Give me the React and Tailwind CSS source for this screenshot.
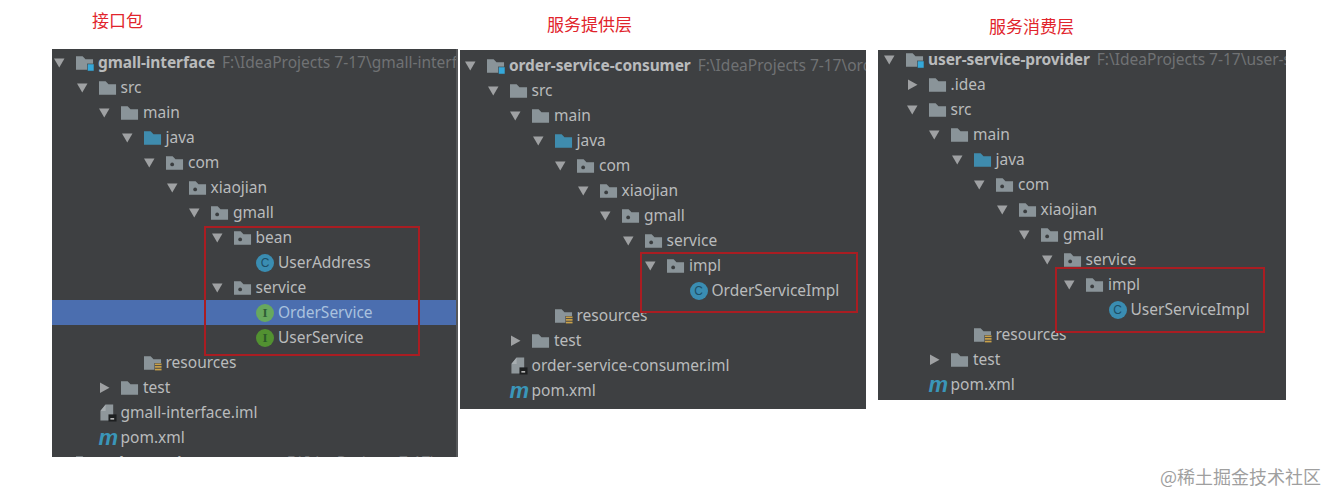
import React from "react";

const Folder = ({ kind }) => {
  const fill = kind === "java" ? "#3f8cae" : "#8a9499";
  return (
    <svg width="19" height="18" viewBox="0 0 19 18" className="block">
      <path d="M0 2h7l3 3h8v11H0z" fill={fill} />
      {kind === "pkg" && <circle cx="6.5" cy="10.5" r="2" fill="#3a3d3f" />}
      {kind === "module" && (
        <rect x="12" y="10" width="7" height="7.5" fill="#35a8da" stroke="#3e4042" strokeWidth="0.6" />
      )}
      {kind === "res" && (
        <g>
          <rect x="11" y="9" width="8" height="9" fill="#3e4042" />
          <rect x="11.5" y="9.5" width="7" height="1.8" fill="#c9a14a" />
          <rect x="11.5" y="12.2" width="7" height="1.8" fill="#c9a14a" />
          <rect x="11.5" y="15" width="7" height="1.8" fill="#c9a14a" />
        </g>
      )}
    </svg>
  );
};

const FileIcon = () => (
  <svg width="19" height="19" viewBox="0 0 19 19" className="block">
    <path d="M1.5 8L7 1h8v17H1.5z" fill="#8f979b" />
    <path d="M1.5 8H7V1z" fill="#a7adb0" />
    <rect x="10" y="11.5" width="8.5" height="7.5" fill="#1d1f20" />
    <rect x="12" y="15.5" width="4" height="1.4" fill="#d8d8d8" />
  </svg>
);

const Badge = ({ letter, selected }) => {
  const tone =
    letter === "C"
      ? "bg-[#3a8db2] text-[#1d4e66] font-['Liberation_Sans',sans-serif] text-[12px] font-normal"
      : selected
        ? "bg-[#67a85e] text-[#2f5f36] font-['Liberation_Serif',serif] text-[13px] font-bold"
        : "bg-[#529131] text-[#2c5a2a] font-['Liberation_Serif',serif] text-[13px] font-bold";
  return (
    <span className={`flex h-[18px] w-[18px] items-center justify-center rounded-full leading-none ${tone}`}>
      {letter}
    </span>
  );
};

const Icon = ({ kind, selected }) => {
  if (kind === "C") return <Badge letter="C" />;
  if (kind === "I") return <Badge letter="I" selected={selected} />;
  if (kind === "iml") return <FileIcon />;
  if (kind === "m")
    return (
      <span className="block font-['Liberation_Sans',sans-serif] text-[22px] font-bold italic leading-[25px] text-[#3a96b9]">
        m
      </span>
    );
  return <Folder kind={kind} />;
};

const Arrow = ({ dir }) => (
  <svg width="12" height="12" viewBox="0 0 12 12" className="block">
    {dir === "down" ? <path d="M0 1.5h10.5L5.25 10.5z" fill="#9fa1a3" /> : <path d="M1 .5l9.5 5.25L1 11z" fill="#9fa1a3" />}
  </svg>
);

const Row = ({ base, level, kind, name, arrow, path, selected }) => (
  <div
    className={`flex h-[25px] items-center whitespace-nowrap ${selected ? "bg-[#4b6eaf]" : ""}`}
    style={{ paddingLeft: base + level * 22.5 }}
  >
    <span className="flex w-6 shrink-0 pl-[2px]">{arrow && <Arrow dir={arrow} />}</span>
    <span className="flex w-[18px] shrink-0 items-center">
      <Icon kind={kind} selected={selected} />
    </span>
    <span
      className={`ml-[4px] ${kind === "module" ? "font-bold tracking-[-0.1px]" : ""} ${selected ? "text-[#a9c1de]" : "text-[#b9bbbc]"}`}
    >
      {name}
    </span>
    {path && <span className="ml-[7px] text-[#707274]">{path}</span>}
  </div>
);

const Panel = ({ className, listClass, base, rows, box }) => (
  <div className={`relative overflow-hidden bg-[#3e4042] font-['Noto_Sans',sans-serif] text-[15.5px] ${className}`}>
    <div className={listClass}>
      {rows.map((r, i) => (
        <Row key={i} base={base} level={r[0]} kind={r[1]} name={r[2]} arrow={r[3]} path={r[4]} selected={r[5]} />
      ))}
    </div>
    {box}
  </div>
);

const d = "down";
const r = "right";

const common = (tail) => [
  [2, "folder", "main", d],
  [3, "java", "java", d],
  [4, "pkg", "com", d],
  [5, "pkg", "xiaojian", d],
  [6, "pkg", "gmall", d],
  ...tail,
];

const rows1 = [
  [0, "module", "gmall-interface", d, "F:\\IdeaProjects 7-17\\gmall-interface"],
  [1, "folder", "src", d],
  ...common([
    [7, "pkg", "bean", d],
    [8, "C", "UserAddress"],
    [7, "pkg", "service", d],
    [8, "I", "OrderService", null, null, true],
    [8, "I", "UserService"],
  ]),
  [3, "res", "resources"],
  [2, "folder", "test", r],
  [1, "iml", "gmall-interface.iml"],
  [1, "m", "pom.xml"],
  [0, "module", "order-service-consumer", d, "F:\\IdeaProjects 7-17\\order-service-consumer"],
];

const rows2 = [
  [0, "module", "order-service-consumer", d, "F:\\IdeaProjects 7-17\\order-service-consumer"],
  [1, "folder", "src", d],
  ...common([
    [7, "pkg", "service", d],
    [8, "pkg", "impl", d],
    [9, "C", "OrderServiceImpl"],
  ]),
  [3, "res", "resources"],
  [2, "folder", "test", r],
  [1, "iml", "order-service-consumer.iml"],
  [1, "m", "pom.xml"],
  [0, "module", "", d],
];

const rows3 = [
  [0, "module", "user-service-provider", d, "F:\\IdeaProjects 7-17\\user-service-provider"],
  [1, "folder", ".idea", r],
  [1, "folder", "src", d],
  ...common([
    [7, "pkg", "service", d],
    [8, "pkg", "impl", d],
    [9, "C", "UserServiceImpl"],
  ]),
  [3, "res", "resources"],
  [2, "folder", "test", r],
  [1, "m", "pom.xml"],
];

const Title = ({ children, className }) => (
  <div className={`font-['Noto_Sans_CJK_SC',sans-serif] text-[17px] font-normal leading-6 text-[#e1242c] ${className}`}>
    {children}
  </div>
);

const RedBox = ({ className }) => (
  <div className={`pointer-events-none absolute border-2 border-[#a91d22] ${className}`} />
);

export default function App() {
  return (
    <div className="relative flex h-[503px] w-[1336px] items-start overflow-hidden bg-white pl-[52px]">
      <div className="w-[406px]">
        <Title className="h-[49px] pl-10 pt-2">接口包</Title>
        <Panel
          className="h-[408px] border-r-2 border-[#555759]"
          listClass="pt-px"
          base={0}
          rows={rows1}
          box={<RedBox className="left-[152px] top-[177px] h-[130px] w-[216px]" />}
        />
      </div>
      <div className="ml-[2px] w-[406px]">
        <Title className="h-[50px] pl-[87px] pt-3">服务提供层</Title>
        <Panel
          className="h-[359px]"
          listClass="pt-[3px]"
          base={3}
          rows={rows2}
          box={<RedBox className="left-[180px] top-[202px] h-[61px] w-[218px]" />}
        />
      </div>
      <div className="ml-3 w-[408px]">
        <Title className="h-[50px] pl-[111px] pt-[13.5px]">服务消费层</Title>
        <Panel
          className="h-[350px]"
          listClass="-mt-[3px]"
          base={4}
          rows={rows3}
          box={<RedBox className="left-[177px] top-[217px] h-[66px] w-[210px]" />}
        />
      </div>
      <div className="absolute left-[1160px] top-[464px] font-['Noto_Sans_CJK_SC',sans-serif] text-[18px] leading-6 text-[#9f9f9f]">
        @稀土掘金技术社区
      </div>
    </div>
  );
}
